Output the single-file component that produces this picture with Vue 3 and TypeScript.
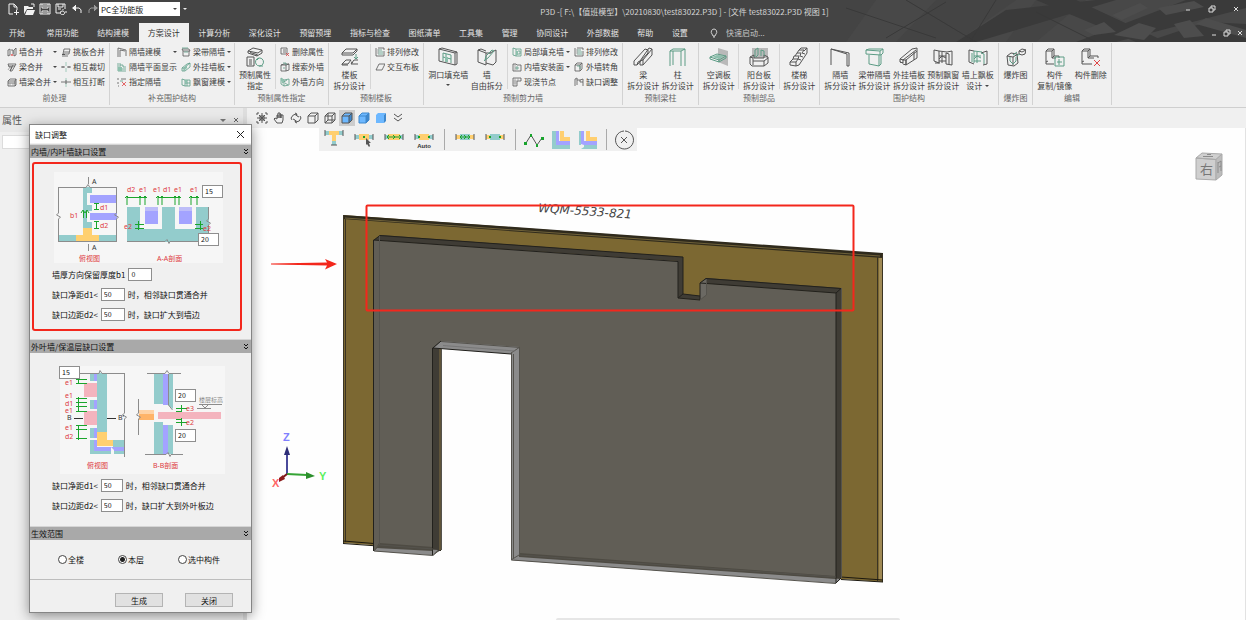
<script setup lang="ts">
import { h, ref } from 'vue'

type Stroke = [kind: string, d: string]

const palette: Record<string, string> = {
  k: '#555555', g: '#5c9c85', r: '#e04444', w: '#f2f2f2', y: '#b9b9b9', o: '#ffcf70',
  t: '#93cccc', p: '#a3a3ff', b: '#3f88cc', c: '#6db8ff', e: '#18a32c', l: '#8dc0ad', x: '#9a9a9a',
}

/* Lower-case kinds are outlines, upper-case kinds are filled with the same colour. */
const glyphs: Record<string, Stroke[]> = {
  wallMerge: [['k', 'M1 3v6M1 3l2-1v6l-2 1M7 3l2-2v7M7 3v6l2-1'], ['k', 'M4 3h2v4'], ['r', 'M4 9l1-2 1 2']],
  beamMerge: [['k', 'M1 2h8L5 9H3l2-4H2zM2 4h6M3 9l3-6'], ['x', 'M1 8l2-3']],
  wallBeam: [['k', 'M1 4l2-2h6v6L8 9H1zM1 4h7l1-2M8 4v5M1 6h7'], ['x', 'M3 6v3M6 6v3']],
  slabMerge: [['k', 'M2 7l1-5h6L8 7zM1 9h6M3 5h5'], ['K', 'M1 7h3v1H1z']],
  cut: [['l', 'M5 0v4M5 6v4'], ['k', 'M0 5h4M6 5h4M2 4v2M8 4v2']],
  split: [['l', 'M5 1v3M5 6v4'], ['k', 'M0 5h10M5 3v4']],
  partModel: [['k', 'M1 10V1l8 2v6M3 10V3l5 1']],
  partPlan: [['g', 'M1 1v8h8M3 1v6h6M3 3h3v2h3'], ['L', 'M1 5h4v4H1z']],
  partPick: [['k', 'M1 1v2M1 5v2M4 2h5M1 9h1'], ['r', 'M5 5l4 4M9 5l-4 4'], ['g', 'M3 4h3']],
  beamPart: [['k', 'M1 2h7l1 2H2zM2 4v5h6V4'], ['g', 'M3 5h4M1 1h6']],
  outerPanel: [['g', 'M1 6l5-4 3-1v4L4 9H1zM1 6h2l6-5M3 6v3'], ['L', 'M3 6l3-3v3L3 9z']],
  bayModel: [['g', 'M1 2l3 1v6L1 8zM4 3h5v6H4M6 3v6M4 6h5'], ['L', 'M4 3h2v3H4z']],
  preAttr: [['k', 'M3 4l5-3 9 2-4 3zM3 4v2l9 3 5-3V3M12 7v2M2 10h7v9H2zM4 13h3M4 15h3M4 17h3'], ['K', 'M5 5l7 2v1L5 6z'], ['g', 'M14 11a4 4 0 1 0 1 0zM12 13l2-2M14 19h4']],
  delAttr: [['k', 'M1 1h6v6H1zM3 3h3M3 5h3'], ['r', 'M6 6l3 3M9 6L6 9']],
  findWall: [['k', 'M1 3l3-1h5v6l-3 1H1zM1 3h5v6M6 3l3-1'], ['g', 'M3 1h3v2M3 6h2']],
  wallDir: [['g', 'M1 1l3 2v6L1 7zM4 3l5-1v6L4 9M2 6l5-3M5 6l3 2'], ['L', 'M1 1l3 2v3L1 4z']],
  slabSplit: [['k', 'M2 6l4-4h11l-4 4zM2 6v2h11l4-4V2M2 17l4-4h5l-3 4zM11 17l3-4h4M11 17h7M2 17v1h6M11 15l2 1'], ['g', 'M16 7v5M14 10l2 2 2-2']],
  arrange: [['k', 'M1 1v8h8V4M3 1h6v2'], ['g', 'M3 3h4M3 5h5M3 7h5'], ['x', 'M3 2v5']],
  slabLay: [['k', 'M1 8l3-6h6L7 8z']],
  opening: [['k', 'M1 2l16 4v12L1 14zM1 2l3-1 15 4v12l-2 1M17 6l2-1'], ['g', 'M5 6v8M13 8v8M5 10l8 2M5 6l8 2M8 7v3M8 11v4'], ['L', 'M7 10h3v5H7z']],
  freeSplit: [['k', 'M1 3l8 3v12l-8-3zM1 3l3-1 5 2M9 6h4l6-3v12l-3 3-7-2M13 6v1'], ['g', 'M8 13l1-4 6-6 2 1-6 7zM8 13l-1 1']],
  localFill: [['g', 'M1 1l3 1v7L1 8zM4 2h5v7H4M6 4h2v3H6'], ['L', 'M4 4h2v4H4z']],
  inFace: [['k', 'M1 2h3l1 1h4v6H1z'], ['g', 'M5 4v4M3 6h4'], ['x', 'M3 2v7']],
  castNode: [['k', 'M1 1h8v3H5v5H1z'], ['x', 'M3 1v8M1 4h4M6 1v3M1 6h4']],
  corner: [['k', 'M1 3h5v6H1zM1 3l2-2h5v6L6 9M6 3l2-2'], ['g', 'M3 4h3v3']],
  notch: [['k', 'M1 9V2l2-1v7M3 3h3v2h3v4M6 3l3-1v3'], ['x', 'M1 2h3']],
  beam: [['k', 'M1 14L12 2l3 1v4M1 14v4h3l1-3 2-1M7 14v4h3l9-10V2l-3-1L7 14M4 18l11-12M10 18v-5l9-11M7 14l3-1']],
  column: [['g', 'M2 4v15M2 4l3-2h12v17M2 4h11l4-2M13 4v15M5 4v14']],
  acSlab: [['Y', 'M9 1l10 3v15l-10-4z'], ['g', 'M1 10l7-3 9 2-7 4zM1 10v2l9 3 7-4V9M10 13v2'], ['L', 'M3 10l5-2 7 1-5 3z']],
  balcony: [['Y', 'M3 1h16v10H3z'], ['k', 'M1 10l4-2v3h10V8l4 2v6l-4 3H3l-2-2zM1 10l3 1v3h11l4-3M15 14v5M4 14v4'], ['g', 'M6 10V3l3-2v7l-2 2M12 9V3l3 1v5']],
  stairs: [['k', 'M1 15l3-3h5l-2 3zM4 12l1-3h5l-1 3M6 9l2-3h4l-1 3M8 6l2-3h5l-2 3M10 3l2-2h6l-3 3M7 15v4l3-1 8-12V1M1 15v3l6 1M9 12l3 1M11 9l3 1M13 6l3 1']],
  partition: [['k', 'M1 18V2l18 4v13h-2M1 2l16 5v12']],
  beamPartBig: [['g', 'M1 3l3-1h14v4l-2 2-15-1zM1 3l14 1 3-2M15 4v4M4 8v9l10 2V8M16 8v9l-2 2']],
  outerBig: [['k', 'M1 12L13 2l5-1v10L7 18v-5M1 12v3l3 1v-4M1 12l3 1L17 3M4 13h3L18 4M7 13v5l-3-1M15 5v8M1 15l3 1']],
  bayBig: [['k', 'M1 3l5 1v12l-5-2zM6 4l8 1 5-1v14l-6-1V6M6 9h7M6 14h7M9 5v11M13 6l3 1v10M6 12l3-3 4 2M2 16h5']],
  floatBig: [['k', 'M1 3l5 1M1 3v12l5 2M13 6l6-2v13l-4 1'], ['g', 'M6 4v12M4 6v9M6 4l8 1M6 9h7M6 14h7M9 5v11M13 6l3 1v10M6 12l3-3 4 2']],
  explode: [['k', 'M1 9l4-3 6 1 1 9-4 3-6-1zM1 9l6 1 5-3M7 10v8M13 4l3-2 4 1-1 4-3 1-3-1zM13 4l3 1 4-2'], ['g', 'M4 10v4l3 3 3-3v-4M7 8l4-3M10 9l4-2']],
  copyMir: [['k', 'M1 4l2-2h6v7h5v2M1 4v13h8M1 4h6v7h4M7 4l2-2M7 11l2-2M1 15l2-1'], ['g', 'M10 10h9v9h-9zM14 12v6M12 15h5']],
  compDel: [['k', 'M1 4l2-2h6v7h8v2M1 4v13h10M1 4h6v7h6M7 4l2-2M7 11l2-2M1 15l2-1'], ['r', 'M13 13l6 6M19 13l-6 6']],
  newFile: [['w', 'M2 1h5l3 3v3M2 1v10h4M7 1v3h3'], ['W', 'M9 7h1v2h2v1h-2v2H9v-2H7V9h2z']],
  open: [['W', 'M1 3h4l1 1h4v2H4l-3 5zM4 7h8l-2 5H2z'], ['w', 'M8 1h3v3']],
  save: [['w', 'M1 1h10v10H1zM3 1v4h6V1M3 11V8h6v3'], ['X', 'M4 9h4v2H4zM4 2h4v2H4z']],
  saveAs: [['w', 'M1 1h9v5M1 1v9h4M3 1v3h5V1M3 6h3'], ['w', 'M7 8a2 2 0 1 0 1 0zM8 6v1M8 11v1M5 9h1M10 9h2']],
  undo: [['w', 'M5 2L2 5l3 3M2 5h6q3 1 2 5'], ['W', 'M1 5l4-3v6z']],
  redo: [['x', 'M7 2l3 3-3 3M10 5H4q-3 1-2 5'], ['X', 'M11 5L7 2v6z']],
  bulb: [['w', 'M5 1a3 3 0 0 0-2 5l1 2h2l1-2a3 3 0 0 0-2-5M4 9h2']],
  fit: [['k', 'M1 3V1h2M9 1h2v2M11 9v2H9M3 11H1V9M6 1v10M1 6h10M3 3l2 2M9 3L7 5M3 9l2-2M9 9L7 7M4 4h4v4H4z'], ['K', 'M5 5h2v2H5z']],
  hand: [['k', 'M4 11L1 7l1-1 2 1V3h1v3V1h2v5V2h1v4V3h2v5l-1 3z']],
  orbit: [['k', 'M1 6q2-4 5-4l1 2M5 1l2 1-1 2M11 6q-1 4-5 4l-1-2M7 11l-2-1 1-2M1 6l1 2M11 6l-1-2M3 7l2 1M9 5L7 4']],
  cube: [['k', 'M1 4h7v7H1zM1 4l3-3h7v7l-3 3M8 4l3-3']],
  wire: [['k', 'M1 4h7v7H1zM1 4l3-3h7v7l-3 3M8 4l3-3M4 1v7h7M4 8l-3 3']],
  blueEdge: [['C', 'M1 4h7v7H1z'], ['B', 'M8 4l3-3v7l-3 3z'], ['C', 'M1 4l3-3h7L8 4z'], ['k', 'M1 4h7v7H1zM1 4l3-3h7v7l-3 3M8 4l3-3']],
  blueLine: [['C', 'M1 4l3-3h7L8 4v7H1z'], ['B', 'M8 4l3-3v7l-3 3z'], ['b', 'M1 4h7v7H1zM1 4l3-3h7v7l-3 3M8 4l3-3']],
  blueSoft: [['C', 'M1 3l2-2h8L9 3v8H1z'], ['B', 'M9 3l2-2v8l-2 2z']],
  more: [['k', 'M2 2l4 3 4-3M2 6l4 3 4-3']],
  tJoint: [['T', 'M1 1h4v4H1zM15 1h4v4h-4zM8 11h4v4H8z'], ['O', 'M5 1h10v4h-3v6H8V5H5z'], ['k', 'M1 0v6M19 0v6M7 15h6']],
  pick: [['T', 'M1 5h4v4H1zM15 5h4v4h-4z'], ['O', 'M5 4h10v6H5z'], ['k', 'M1 4v6M19 4v6'], ['E', 'M9 6h2v2H9z'], ['K', 'M12 8l5 5-2 0 1 3-1 1-2-3-1 1z']],
  spread: [['T', 'M1 5h3v4H1zM16 5h3v4h-3z'], ['O', 'M4 4h12v6H4z'], ['k', 'M1 4v6M19 4v6'], ['e', 'M3 7h14M5 5L3 7l2 2M15 5l2 2-2 2M9 5l2 2-2 2']],
  auto: [['T', 'M1 5h4v4H1zM15 5h4v4h-4z'], ['O', 'M5 4h10v6H5z'], ['k', 'M1 4v6M19 4v6'], ['E', 'M4 6h2v2H4zM14 6h2v2h-2z']],
  spread2: [['O', 'M1 5h4v4H1zM15 5h4v4h-4z'], ['T', 'M5 4h10v6H5z'], ['k', 'M1 4v6M19 4v6'], ['e', 'M5 7h10M7 5L5 7l2 2M13 5l2 2-2 2M9 5l2 2-2 2']],
  inner: [['O', 'M1 5h4v4H1zM15 5h4v4h-4z'], ['T', 'M5 4h10v6H5z'], ['k', 'M1 4v6M19 4v6'], ['E', 'M4 6h2v2H4zM14 6h2v2h-2z']],
  poly: [['k', 'M2 13l5-8 6 10 5-7'], ['E', 'M0 12h3v3H0zM6 4h2v3H6zM12 14h2v3h-2zM17 7h3v3h-3z']],
  lShape: [['T', 'M1 1h4v14h14v4H1z'], ['P', 'M5 1h3v10h11v4H5z'], ['O', 'M9 1h4v6h6v4H9z']],
  lShape2: [['T', 'M1 1h2v14H1zM6 15h13v4H3l3-2z'], ['P', 'M3 1h3v10h13v4H6l-3-1z'], ['O', 'M8 1h4v6h7v4H8z']],
  close: [['k', 'M10 1a9 9 0 1 0 1 0M7 7l6 6M13 7l-6 6']],
}

const Glyph = (p: { name: string; size: number }) =>
  h('svg', { width: p.size, height: p.size, viewBox: `0 0 ${p.size} ${p.size}`, 'aria-hidden': 'true' },
    (glyphs[p.name] ?? []).map(([kind, d]) => {
      const colour = palette[kind.toLowerCase()]
      return h('path', kind === kind.toLowerCase()
        ? { d, fill: 'none', stroke: colour, 'stroke-width': p.size > 10 ? 1 : 0.8 }
        : { d, fill: colour })
    }))
Glyph.props = ['name', 'size']

interface Small { icon: string; label: string; menu?: boolean }
interface Big { icon: string; lines: string[]; menu?: boolean }
interface Group { title: string; bigs?: Big[]; cols?: Small[][]; ruled?: boolean }
const s = (icon: string, label: string, menu = false): Small => ({ icon, label, menu })
const b = (icon: string, lines: string[], menu = false): Big => ({ icon, lines, menu })

const groups: Group[] = [
  { title: '前处理', cols: [
    [s('wallMerge', '墙合并', true), s('beamMerge', '梁合并', true), s('wallBeam', '墙梁合并', true)],
    [s('slabMerge', '挑板合并'), s('cut', '相互裁切'), s('split', '相互打断')]] },
  { title: '补充围护结构', cols: [
    [s('partModel', '隔墙建模', true), s('partPlan', '隔墙平面显示'), s('partPick', '指定隔墙')],
    [s('beamPart', '梁带隔墙', true), s('outerPanel', '外挂墙板', true), s('bayModel', '飘窗建模', true)]] },
  { title: '预制属性指定', bigs: [b('preAttr', ['预制属性', '指定'])], cols: [
    [s('delAttr', '删除属性'), s('findWall', '搜索外墙'), s('wallDir', '外墙方向')]] },
  { title: '预制楼板', bigs: [b('slabSplit', ['楼板', '拆分设计'])], cols: [[s('arrange', '排列修改'), s('slabLay', '交互布板')]] },
  { title: '预制剪力墙', bigs: [b('opening', ['洞口填充墙'], true), b('freeSplit', ['墙', '自由拆分'])], cols: [
    [s('localFill', '局部填充墙', true), s('inFace', '内墙安装面', true), s('castNode', '现浇节点')],
    [s('arrange', '排列修改'), s('corner', '外墙转角'), s('notch', '缺口调整')]] },
  { title: '预制梁柱', bigs: [b('beam', ['梁', '拆分设计']), b('column', ['柱', '拆分设计'])] },
  { title: '预制部品', ruled: true, bigs: [b('acSlab', ['空调板', '拆分设计']), b('balcony', ['阳台板', '拆分设计']), b('stairs', ['楼梯', '拆分设计'])] },
  { title: '围护结构', bigs: [b('partition', ['隔墙', '拆分设计']), b('beamPartBig', ['梁带隔墙', '拆分设计']), b('outerBig', ['外挂墙板', '拆分设计']), b('bayBig', ['预制飘窗', '拆分设计']), b('floatBig', ['墙上飘板', '设计'], true)] },
  { title: '爆炸图', bigs: [b('explode', ['爆炸图'])] },
  { title: '编辑', bigs: [b('copyMir', ['构件', '复制/镜像']), b('compDel', ['构件删除'])] },
]

const tabs = ['开始', '常用功能', '结构建模', '方案设计', '计算分析', '深化设计', '预留预埋', '指标与检查', '图纸清单', '工具集', '管理', '协同设计', '外部数据', '帮助', '设置']
const activeTab = ref('方案设计')
const quick = [['newFile', '新建'], ['open', '打开'], ['save', '保存'], ['saveAs', '另存'], ['undo', '撤销'], ['redo', '重做']]
const views = [['fit', '全图'], ['hand', '平移'], ['orbit', '旋转'], ['cube', '消隐'], ['wire', '线框'], ['blueEdge', '着色边'], ['blueLine', '着色线'], ['blueSoft', '着色'], ['more', '更多']]
const tools = [
  [['tJoint', 'T形节点'], ['pick', '选择节点'], ['spread', '拉伸节点'], ['auto', '自动']],
  [['spread2', '拉伸墙身'], ['inner', '墙身']],
  [['poly', '折线'], ['lShape', '转角一'], ['lShape2', '转角二']],
  [['close', '退出']],
]

const keepB1 = ref('0')
const inD1 = ref('50')
const inD2 = ref('50')
const outD1 = ref('50')
const outD2 = ref('50')
const topE1 = ref('15')
const topE2 = ref('20')
const outE1 = ref('15')
const outE3 = ref('20')
const outE2 = ref('20')
const scopes = ['全楼', '本层', '选中构件']
const scope = ref('本层')

const upArrows = [127, 140, 145, 158, 162, 175, 179, 191, 197]
const sideTicks = [379, 383, 398, 402, 406, 411, 425, 429, 438]
const planLabels: [string, number][] = [['e1', 385], ['e1', 398], ['d1', 406], ['e1', 413], ['e1', 430], ['d2', 439]]
const sectionLabels: [string, number][] = [['d2', 127], ['e1', 139], ['e1', 153], ['d1', 163], ['e1', 174], ['e1', 190]]
</script>

<template>
  <div class="app">
    <header class="chrome">
      <svg class="backdrop" viewBox="0 0 400 42" preserveAspectRatio="xMaxYMin slice" aria-hidden="true">
        <path fill="#4b4b4b" d="M0 42L30 0H90L50 42zM110 42l60-42h20l-30 42zM240 0h160v42H190z" opacity=".5" />
        <path fill="#3a3a3a" d="M160 10l90-10h20L130 42h-20zM230 42L340 0h60v8L270 42zM300 42l60-20 40 2v18zM190 0h40l90 42h-30z" />
        <path fill="#4d4d4d" d="M266 15l28-12 8 5-26 12zM238 30l20-8 12 10-22 3zM312 8l36-7 10 6-38 8zM268 35l25-12 17 5-12 12zM360 18l40 12v8l-50-14zM328 24l16-4 14 16-20 2z" />
        <path stroke="#393939" fill="none" d="M60 0l70 42M40 38L100 2M0 8l90 30M150 0l-26 42M190 12l60 30" />
      </svg>
      <div class="title-row">
        <div class="quick">
          <button v-for="[icon, label] in quick" :key="icon" type="button" :aria-label="label"><Glyph :name="icon" :size="12" /></button>
        </div>
        <div class="mode">
          <select aria-label="功能版本"><option>PC全功能版</option></select>
          <i class="caret"></i>
        </div>
        <button class="quick-more" type="button" aria-label="自定义"><i class="caret light"></i></button>
        <h1>P3D -[ F:\【值班模型】\20210830\test83022.P3D ] - [文件 test83022.P3D 视图 1]</h1>
        <div class="win-buttons">
          <button type="button" aria-label="最小化"><svg width="8" height="8"><path d="M2 5h4" /></svg></button>
          <button type="button" aria-label="还原"><svg width="8" height="8"><path d="M1 3h4v4H1zM3 3V1h4v4H5" /></svg></button>
          <button type="button" aria-label="关闭"><svg width="8" height="8"><path d="M2 2l4 4M6 2L2 6" /></svg></button>
        </div>
      </div>
      <div class="tab-row">
        <nav>
          <button v-for="t in tabs" :key="t" type="button" :class="{ active: t === activeTab }" @click="activeTab = t">{{ t }}</button>
        </nav>
        <label class="launch"><Glyph name="bulb" :size="10" /><input type="text" placeholder="快速启动..." aria-label="快速启动" /></label>
        <div class="win-buttons inner">
          <button type="button" aria-label="最小化文档"><svg width="8" height="8"><path d="M2 6h4" /></svg></button>
          <button type="button" aria-label="还原文档"><svg width="8" height="8"><path d="M1 3h4v4H1zM3 3V1h4v4H5" /></svg></button>
          <button type="button" aria-label="关闭文档"><svg width="8" height="8"><path d="M2 2l4 4M6 2L2 6" /></svg></button>
        </div>
      </div>
    </header>

    <section class="ribbon">
      <div v-for="g in groups" :key="g.title" class="group">
        <div class="group-body">
          <div v-if="g.bigs" class="bigs" :class="{ ruled: g.ruled }">
            <button v-for="item in g.bigs" :key="item.icon" type="button" class="big">
              <Glyph :name="item.icon" :size="20" />
              <span v-for="(line, i) in item.lines" :key="line">{{ line }}<i v-if="item.menu && i > 0" class="caret"></i></span>
              <i v-if="item.menu && item.lines.length === 1" class="caret below"></i>
            </button>
          </div>
          <div v-if="g.cols" class="cols" :class="{ split: g.bigs }">
            <div v-for="(col, c) in g.cols" :key="c" class="col">
              <button v-for="item in col" :key="item.label" type="button" class="small">
                <Glyph :name="item.icon" :size="10" /><span>{{ item.label }}</span><i v-if="item.menu" class="caret"></i>
              </button>
            </div>
          </div>
        </div>
        <div class="group-title">{{ g.title }}</div>
      </div>
    </section>

    <main>
      <aside class="props">
        <header><h2>属性</h2><i class="caret wide"></i><button type="button" aria-label="关闭属性"><svg width="8" height="8"><path d="M2 2l4 4M6 2L2 6" stroke="#666" /></svg></button></header>
        <input type="text" aria-label="属性筛选" />
      </aside>

      <section class="view">
        <div class="view-bar">
          <button v-for="[icon, label] in views" :key="icon" type="button" :aria-label="label" :class="{ on: icon === 'blueEdge' }"><Glyph :name="icon" :size="12" /></button>
        </div>
        <div class="canvas">
          <svg class="scene" role="img" aria-label="墙板三维模型">
            <g transform="translate(-247 -128)">
              <text class="tag" transform="translate(538 212) rotate(4)">WQM-5533-821</text>
              <path fill="#7c6832" d="M343 215L883 254V582L519 556V347L441 341V550L343 543z" />
              <path fill="#2f2a1c" d="M343 215L883 253V258L343 219z" />
              <path stroke="#70623a" fill="none" d="M345 218L880 256" />
              <path fill="#a08a55" d="M879 258h3v322h-3z" />
              <path stroke="#3b3424" fill="none" d="M877.500 257V581M343.500 215V543M882.500 254V582M345.500 219V542" />
              <path stroke="#1b180f" fill="none" d="M343 543.500L441 550.500M841 577L883 580M841 579.500L883 582M343 541L374 543.500" />

              <path fill="#615e56" d="M374 240L678 261V298L700 300V283L836 293V583L511 560V353L433 348V555L374 551z" />
              <path fill="#3f3c35" d="M374 240L380 235L683 257V294L701 296V300L678 298V261zM700 283L706 278L841 288V578L836 583V293zM432 348L441 341V550L433 555z" />
              <path fill="#5f543a" d="M439 345h2v205h-2z" />
              <path fill="#6b6963" d="M700 283L706 279V295L700 300z" />
              <path fill="#8b8b8b" d="M433 348L441 341L520 347L511 354zM511 353L519 347V555L511 560zM374 551L379 546L438 550L433 555zM511 560L519 555L841 579L836 583z" />
              <path fill="#4e4b43" d="M379 543L433 547V551L376 548zM519 553L836 576V579L519 557z" />
              <path stroke="#22211d" fill="none" d="M373.500 551V240L678 261.500V298L700 300V283L836 293V583M374 240L380 235.500L683 257V294L678 298M683 294L700 296M700 283L706 278.500L841 288.500M836 293L841 288.500M432.500 348V555M433 348L441 341M433 348L511 354M836 583L841 578" />
              <path stroke="#55534d" fill="none" d="M379.500 236V545L433 549M379 545L374 551L433 555.500L438 551M441 341.500L520 347.500M519.500 347V555L836 577M511.500 353V560L836 583.500M511 353L520 347M511 560L519 555M706.500 279V295L700 300M441.500 349V550M513.500 354V558M841.500 288V578" />
              <path stroke="#777" fill="none" d="M443 345.500L515 351" />

              <rect x="366.500" y="205.500" width="487" height="105" fill="none" stroke="#f3271c" stroke-width="2" rx="1" />
              <path fill="#f3271c" d="M271 263.500L327 262.500L325 259L337 264L325 269.500L327 265.500L271 264.500z" />

              <path stroke="#4a4a9a" stroke-width="2" d="M287 474V455" /><path fill="#2e2e78" d="M284 455L287 446L290 455z" />
              <path stroke="#35a435" stroke-width="2" d="M287 474L307 475" /><path fill="#2c8f2c" d="M306 472L315 476L306 479z" />
              <path stroke="#7c1a1a" stroke-width="2" d="M287 474L282 478" /><path fill="#8b1c1c" d="M283 475l2 4-6 3v-4z" />
              <text class="axis" x="283" y="441" fill="#8080ff">Z</text>
              <text class="axis" x="319" y="480" fill="#5cf05c">Y</text>
              <text class="axis" x="272" y="487" fill="#ff6666">X</text>

              <path fill="#cfcfcf" stroke="#aaa" d="M1196 158L1202 153L1222 154L1216 159.500zM1196 158L1216 159.500V180L1196 179z" />
              <path fill="#bcbcbc" stroke="#aaa" d="M1216 159.500L1222 154V175L1216 180z" />
              <path stroke="#8b8b8b" fill="none" d="M1203 156.500h10M1207 154.500h4M1218 162v11M1218 163l3-2v10M1219 167l2-1" />
              <text class="cube" x="1200" y="174">右</text>
            </g>
          </svg>
          <div class="tools">
            <div v-for="(set, i) in tools" :key="i" class="set">
              <button v-for="[icon, label] in set" :key="icon" type="button" :aria-label="label">
                <Glyph :name="icon" :size="20" /><small v-if="icon === 'auto'">Auto</small>
              </button>
            </div>
          </div>
          <div class="scroll-hint"></div>
        </div>
      </section>
    </main>

    <form class="dialog" role="dialog" aria-label="缺口调整" @submit.prevent>
      <header><h2>缺口调整</h2><button type="button" aria-label="关闭对话框"><svg width="9" height="9"><path d="M1 1l7 7M8 1L1 8" stroke="#222" /></svg></button></header>

      <h3>内墙/内叶墙缺口设置<button type="button" aria-label="折叠内墙设置"><svg width="6" height="7"><path d="M1 1l2 2 2-2M1 4l2 2 2-2" stroke="#111" fill="none" /></svg></button></h3>
      <div class="body first">
        <div class="figure">
          <svg width="169" height="91" viewBox="54 172 169 91" role="img" aria-label="内叶墙俯视图与剖面">
            <rect x="54" y="172" width="169" height="91" fill="#f6f6f6" />
            <g fill="#93cccc"><rect x="83" y="187" width="9" height="48" /><rect x="58" y="235" width="59" height="7" /><rect x="127" y="207" width="82" height="35" /></g>
            <path fill="#f6f6f6" d="M87 193h5v12h-5zM87 211h5v11h-5zM140 207h22v22h-22zM175 207h21v22h-21z" />
            <path fill="#a3a3ff" d="M90 195h27v8H90zM90 213h27v7H90zM145 207h13v17h-13zM179 207h13v17h-13z" />
            <path fill="#bdbdf8" d="M145 207h13v4h-13zM179 207h13v4h-13z" />
            <path fill="#ffd070" d="M83 228h9v7h7v7H76v-7h7z" />
            <path class="line" d="M58.500 187V213l-2 2 4 2-2 2V242M58 187.500H86l2-3 2 3H117M116.500 187V213l-2 2 4 2-2 2V242M58 241.500H117M88.500 177v7M88.500 244v7M127 241.500H165l2-2 2 4 1-2H209M208.500 207V219l-2 2 4 2-2 2V242" />
            <path class="dim" d="M127 197.500H146M158 197.500H181M191 197.500H198M96.500 203V210M94 203.500h5M94 209.500h5M96.500 221V229M94 221.500h5M94 228.500h5M83.500 211v7M86.500 211v7M81 213l2-3 2 3 2-3 2 3M138.500 221V230M135 224.500h9M135 228.500h9M200.500 221V230M195 224.500h8M195 228.500h8" />
            <path v-for="x in upArrows" :key="x" class="dim" :d="`M${x} 205V196M${x - 2} 198l2-2 2 2`" />
            <g class="mark"><text v-for="[t, x] in sectionLabels" :key="x" :x="x" y="192">{{ t }}</text>
              <text x="100" y="210">d1</text><text x="100" y="228">d2</text><text x="70" y="218">b1</text><text x="124" y="229">e2</text><text x="203" y="231">e2</text>
              <text x="79" y="261">俯视图</text><text x="157" y="261">A-A剖面</text></g>
            <g class="note"><text x="92" y="184">A</text><text x="92" y="250">A</text></g>
          </svg>
          <input v-model="topE1" class="e1" type="text" aria-label="e1" /><input v-model="topE2" class="e2" type="text" aria-label="e2" />
        </div>
        <div class="field"><label for="b1">墙厚方向保留厚度b1</label><input id="b1" v-model="keepB1" type="text" /></div>
        <div class="field"><label for="d1">缺口净距d1&lt;</label><input id="d1" v-model="inD1" type="text" /><span>时，相邻缺口贯通合并</span></div>
        <div class="field"><label for="d2">缺口边距d2&lt;</label><input id="d2" v-model="inD2" type="text" /><span>时，缺口扩大到墙边</span></div>
        <div class="highlight"></div>
      </div>

      <h3>外叶墙/保温层缺口设置<button type="button" aria-label="折叠外叶墙设置"><svg width="6" height="7"><path d="M1 1l2 2 2-2M1 4l2 2 2-2" stroke="#111" fill="none" /></svg></button></h3>
      <div class="body second">
        <div class="figure">
          <svg width="171" height="108" viewBox="54 366 171 108" role="img" aria-label="外叶墙俯视图与剖面">
            <rect x="60" y="366" width="165" height="108" fill="#f6f6f6" />
            <path fill="#93cccc" d="M97 373h10v59H97zM90 373h4v8h-4zM90 400h4v9h-4zM90 428h4v10h-4zM90 440h4v11h30v3H90zM113 440h11v7h-11zM154 374h9v30h-9zM168 374h5v35l-5-4zM154 422h9v32h-9zM168 425h5v29h-5z" />
            <path fill="#a3a3ff" d="M94 373h3v8h-3zM94 400h3v9h-3zM94 428h3v10h-3zM94 440h3v7h27v4H94zM163 374h5v31h-5zM163 425h5v29h-5z" />
            <path fill="#f4b4be" d="M84 383h13v14H84zM84 411h13v14H84zM158 412h63v7h-63z" />
            <path fill="#ffd070" d="M97 432h10v8h6v6H97z" /><path fill="#ffb469" d="M139 410h15v10h-15z" /><path fill="#ffd3a6" d="M139 410h15v4h-15z" />
            <path fill="#f6f6f6" d="M111 447l3 3v5h-3z" />
            <path class="line" d="M79 373.500H99l1-3 2 3H124M124.500 373V413l-2 2 4 2-2 2V457M147 373.500H165l2-3 2 3H181M145 454.500H166l2-2 2 4 1-2H183M138.500 399V413l-2 2 4 2-2 2V435M199 404.500h23M197 408.500h14M202 405l3 3 3-3M168.500 374V405l4 5" />
            <path stroke="#333" d="M74 418.500h9M107 418.500h9" />
            <path class="dim" d="M78.500 378V383M78.500 397V412M78.500 425V440M181.500 405V412M181.500 418V426M176 408.500h11M176 411.500h6M176 419.500h6M176 422.500h11" />
            <path v-for="y in sideTicks" :key="y" class="dim" :d="`M76 ${y}.5H87`" />
            <g class="mark"><text v-for="[t, y] in planLabels" :key="y" x="65" :y="y">{{ t }}</text>
              <text x="186" y="411">e3</text><text x="186" y="425">e2</text><text x="87" y="468">俯视图</text><text x="153" y="468">B-B剖面</text></g>
            <g class="note"><text x="67" y="420">B</text><text x="118" y="420">B'</text><text class="level" x="199" y="402">楼层标高</text></g>
          </svg>
          <input v-model="outE1" class="o1" type="text" aria-label="外叶e1" /><input v-model="outE3" class="o3" type="text" aria-label="外叶e3" /><input v-model="outE2" class="o2" type="text" aria-label="外叶e2" />
        </div>
        <div class="field tight"><label for="od1">缺口净距d1&lt;</label><input id="od1" v-model="outD1" type="text" /><span>时，相邻缺口贯通合并</span></div>
        <div class="field tight"><label for="od2">缺口边距d2&lt;</label><input id="od2" v-model="outD2" type="text" /><span>时，缺口扩大到外叶板边</span></div>
      </div>

      <h3>生效范围<button type="button" aria-label="折叠生效范围"><svg width="6" height="7"><path d="M1 1l2 2 2-2M1 4l2 2 2-2" stroke="#111" fill="none" /></svg></button></h3>
      <div class="scopes">
        <label v-for="o in scopes" :key="o"><input v-model="scope" type="radio" name="scope" :value="o" />{{ o }}</label>
      </div>
      <footer><button type="submit">生成</button><button type="button">关闭</button></footer>
    </form>
  </div>
</template>

<style>
html, body { background: #f0f0f0; }
body { overflow: hidden; }
</style>

<style scoped>
.app { position: relative; display: flex; flex-direction: column; min-height: 100vh; font: 8px/11px "Noto Sans CJK SC", "Noto Sans", sans-serif; color: #3c3c3c; }
button, input, select { font: inherit; color: inherit; margin: 0; padding: 0; border: 0; border-radius: 0; background: none; box-sizing: border-box; }
h1, h2, h3 { margin: 0; font: inherit; }
svg { display: block; flex: none; }
.caret { display: block; flex: none; border: 2px solid transparent; border-top-color: #444; border-bottom: 0; }

.chrome { position: relative; background: #444; color: #e4e4e4; height: 42px; display: flex; flex-direction: column; }
.backdrop { position: absolute; top: 0; right: 0; width: 400px; height: 42px; }
.title-row, .tab-row { position: relative; display: flex; align-items: center; }
.title-row { height: 23px; }
.quick { display: flex; gap: 4px; padding: 0 0 5px 7px; width: 92px; box-sizing: border-box; }
.quick button { width: 12px; }
.mode { position: relative; display: flex; align-items: center; margin: 0 0 5px 7px; width: 81px; }
.mode select { appearance: none; width: 100%; height: 14px; padding: 0 2px; background: #fff; color: #222; }
.mode .caret { position: absolute; right: 3px; }
.quick-more { padding: 0 3px; margin-bottom: 5px; }
.caret.light { border-top-color: #eee; }
h1 { flex: 1; text-align: center; color: #d6d6d6; white-space: nowrap; padding-right: 69px; }
.win-buttons { display: flex; gap: 16px; padding: 0 6px 6px 0; }
.title-row .win-buttons { margin-left: -64px; }
.win-buttons.inner { gap: 5px; padding: 0 2px 0 0; margin-left: auto; }
.win-buttons path { stroke: #ddd; fill: none; }
.tab-row { height: 19px; }
nav { display: flex; justify-content: space-between; width: 697px; height: 100%; flex: none; }
nav button { padding: 0 9px; white-space: nowrap; }
nav button:first-child { padding-right: 12px; }
nav button.active { background: #f0f0f0; color: #333; }
.launch { display: flex; align-items: center; gap: 7px; margin-left: 12px; }
.launch input { width: 60px; height: 14px; }
.launch input::placeholder { color: #c4c4c4; opacity: 1; }

.ribbon { display: grid; grid-template-columns: 110px 125px 94px 95px 199px 76px 121px 179px 34px 79px; background: #f0f0f0; border-bottom: 1px solid #cfcfcf; padding: 1px 0 2px; }
.group { display: flex; flex-direction: column; border-right: 1px solid #d2d2d2; }
.group-body { display: flex; height: 47px; padding-top: 1px; }
.group-title { text-align: center; color: #666; padding: 1px 0 2px; }
.bigs { display: flex; flex: 1; justify-content: space-around; padding: 0 3px; }
.bigs.ruled { padding: 0; }
.bigs.ruled .big { flex: 1; height: 45px; }
.bigs.ruled .big + .big { border-left: 1px solid #d6d6d6; }
.big { display: flex; flex-direction: column; align-items: center; justify-content: flex-start; white-space: nowrap; padding-top: 3px; }
.big svg { margin-bottom: 2px; }
.big span { display: flex; align-items: center; gap: 3px; }
.caret.below { margin-top: 4px; }
.cols { display: flex; gap: 4px; padding: 0 4px 0 7px; }
.cols.split { border-left: 1px solid #d6d6d6; padding-left: 4px; height: 45px; }
.col { display: flex; flex-direction: column; }
.small { display: flex; align-items: center; gap: 2px; height: 15px; white-space: nowrap; }
.small .caret { margin-left: auto; }

main { flex: 1; display: flex; }
.props { width: 243px; flex: none; border-right: 4px solid #dedede; background: #f0f0f0; box-sizing: content-box; }
.props header { display: flex; align-items: center; height: 20px; padding: 2px 3px 2px 2px; background: #e9e9e9; }
.props h2 { flex: 1; font-size: 10px; line-height: 16px; color: #555; }
.caret.wide { border-width: 3px 3px 0; border-top-color: #777; margin-right: 6px; }
.props input { display: block; width: 235px; height: 14px; margin: 3px 2px; background: #fff; border: 1px solid #dcdcdc; }
.view { flex: 1; display: flex; flex-direction: column; }
.view-bar { display: flex; gap: 1px; height: 20px; align-items: center; padding-left: 7px; background: #f0f0f0; }
.view-bar button { width: 16px; height: 16px; display: grid; place-items: center; }
.view-bar .on { background: #cdcdcd; }
.canvas { position: relative; flex: 1; background: #fefefe; border-right: 1px solid #e2e2e2; overflow: hidden; }
.scene { position: absolute; inset: 0; width: 100%; height: 100%; }
.tag { font: italic 12px "DejaVu Sans", sans-serif; fill: #444; }
.axis { font: bold 11px "Liberation Sans", sans-serif; }
.cube { font-size: 13px; fill: #777; }
.tools { position: absolute; top: 0; left: 72px; display: flex; align-items: center; background: #f0f0f0; height: 23px; padding-right: 3px; }
.set { display: flex; gap: 10px; height: 21px; align-items: center; padding: 0 10px; }
.set:first-child { padding-left: 5px; }
.set:nth-child(3) { gap: 7px; padding: 0 8px; }
.set:last-child { padding: 0 0 0 7px; }
.set + .set { border-left: 1px solid #aaa; }
.tools button { position: relative; width: 20px; height: 20px; }
.tools small { position: absolute; left: 0; right: 0; bottom: 0; text-align: center; font: bold 6px/7px "Liberation Sans", sans-serif; color: #333; }
.scroll-hint { position: absolute; left: 31%; width: 344px; bottom: 0; height: 2px; background: #e6e6e6; border-radius: 2px 2px 0 0; }

.dialog { position: absolute; left: 29px; top: 124px; width: 221px; background: #f0f0f0; border: 1px solid #858585; box-shadow: 0 3px 12px rgba(0, 0, 0, .42); color: #111; }
.dialog > header { display: flex; align-items: center; justify-content: space-between; height: 18px; padding: 0 6px 0 5px; margin-bottom: 2px; background: #fff; }
h3 { display: flex; align-items: center; justify-content: space-between; height: 13px; padding: 0 2px 0 1px; background: #a9a9a9; box-shadow: 0 -1px #d5d5d5; }
.body { position: relative; display: flex; flex-direction: column; gap: 7px; }
.first { padding: 14px 0 19px; }
.second { padding: 13px 0 15px; }
.figure { position: relative; margin: 0 0 -2px 24px; }
.figure input { position: absolute; width: 21px; }
.dialog input[type="text"] { height: 13px; background: #fff; border: 1px solid #8e8e8e; padding: 0 2px 2px; font-size: 7px; }
.figure .e1 { left: 148px; top: 13px; }
.figure .e2 { left: 144px; top: 61px; }
.figure .o1 { left: 5px; top: 0; }
.figure .o3 { left: 121px; top: 23px; }
.figure .o2 { left: 121px; top: 63px; }
.field { display: flex; align-items: center; gap: 3px; padding-left: 22px; height: 13px; white-space: nowrap; }
.field input { width: 24px; }
.field.tight input { width: 22px; }
.highlight { position: absolute; inset: 4px 9px 9px 2px; border: 2px solid #f3271c; border-radius: 3px; pointer-events: none; }
.line { fill: none; stroke: #8c8c8c; }
.dim { fill: none; stroke: #1aa52c; }
.mark { font: 7px "Noto Sans", "Noto Sans CJK SC", sans-serif; fill: #dd3b42; }
.note { font: 7px "Noto Sans", "Noto Sans CJK SC", sans-serif; fill: #333; }
.level { font-size: 6px; fill: #888; }
.scopes { display: grid; grid-template-columns: 60px 60px 1fr; height: 40px; align-items: center; padding-left: 28px; border-bottom: 1px solid #bdbdbd; box-sizing: border-box; }
.scopes label { display: flex; align-items: center; gap: 1px; }
.scopes input { appearance: none; width: 9px; height: 9px; border: 1px solid #444; border-radius: 50%; background: #fff; }
.scopes input:checked { background: radial-gradient(circle, #222 2px, #fff 3px); }
footer { display: flex; justify-content: flex-end; gap: 22px; padding: 13px 18px 5px 0; }
footer button { width: 48px; height: 14px; background: #e1e1e1; border: 1px solid #b4b4b4; }
</style>
